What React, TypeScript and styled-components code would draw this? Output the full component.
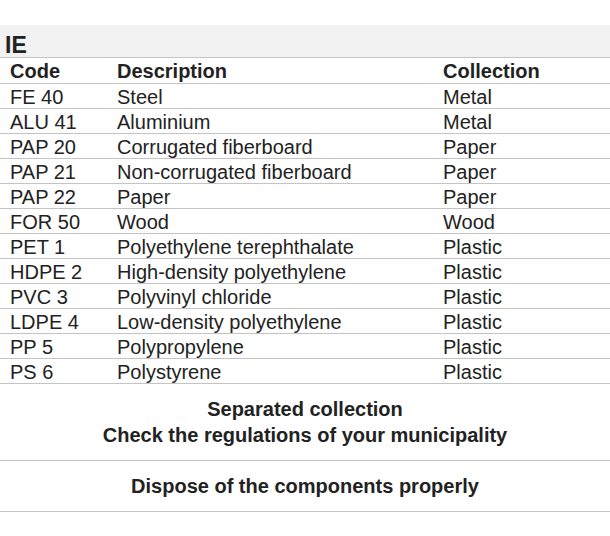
import React from "react";
import styled, { createGlobalStyle } from "styled-components";

const GlobalStyle = createGlobalStyle`
  body {
    margin: 0;
    background: #ffffff;
    font-family: "Liberation Sans", Arial, sans-serif;
    color: #222222;
  }
`;

const Page = styled.div`
  width: 610px;
  padding-top: 25px;
`;

const CountryBar = styled.div`
  height: 28px;
  padding: 4px 0 0 5px;
  background: #f2f2f2;
  border-bottom: 1px solid #c4c4c4;
  font-size: 23px;
  font-weight: 700;
  line-height: 32px;
`;

const Table = styled.div`
  display: grid;
  grid-template-columns: 107px 326px 1fr;
`;

const Row = styled.div<{ $head?: boolean }>`
  display: contents;
  font-weight: ${(p) => (p.$head ? 700 : 400)};
`;

const Cell = styled.div<{ $head?: boolean }>`
  height: ${(p) => (p.$head ? 25 : 23)}px;
  padding: ${(p) => (p.$head ? 0 : 1)}px 0 0 10px;
  border-bottom: 1px solid #c4c4c4;
  font-size: 20px;
  line-height: ${(p) => (p.$head ? 27 : 25)}px;
  white-space: nowrap;
`;

const Notice = styled.div`
  padding: 12px 0;
  border-bottom: 1px solid #c4c4c4;
  text-align: center;
  font-size: 20px;
  font-weight: 700;
  line-height: 26px;
`;

const rows: [string, string, string][] = [
  ["FE 40", "Steel", "Metal"],
  ["ALU 41", "Aluminium", "Metal"],
  ["PAP 20", "Corrugated fiberboard", "Paper"],
  ["PAP 21", "Non-corrugated fiberboard", "Paper"],
  ["PAP 22", "Paper", "Paper"],
  ["FOR 50", "Wood", "Wood"],
  ["PET 1", "Polyethylene terephthalate", "Plastic"],
  ["HDPE 2", "High-density polyethylene", "Plastic"],
  ["PVC 3", "Polyvinyl chloride", "Plastic"],
  ["LDPE 4", "Low-density polyethylene", "Plastic"],
  ["PP 5", "Polypropylene", "Plastic"],
  ["PS 6", "Polystyrene", "Plastic"],
];

const App: React.FC = () => {
  return (
    <Page>
      <GlobalStyle />
      <CountryBar>IE</CountryBar>
      <Table>
        <Row $head>
          <Cell $head>Code</Cell>
          <Cell $head>Description</Cell>
          <Cell $head>Collection</Cell>
        </Row>
        {rows.map(([code, desc, coll]) => (
          <Row key={code}>
            <Cell>{code}</Cell>
            <Cell>{desc}</Cell>
            <Cell>{coll}</Cell>
          </Row>
        ))}
      </Table>
      <Notice>
        Separated collection
        <br />
        Check the regulations of your municipality
      </Notice>
      <Notice>Dispose of the components properly</Notice>
    </Page>
  );
};

export default App;
